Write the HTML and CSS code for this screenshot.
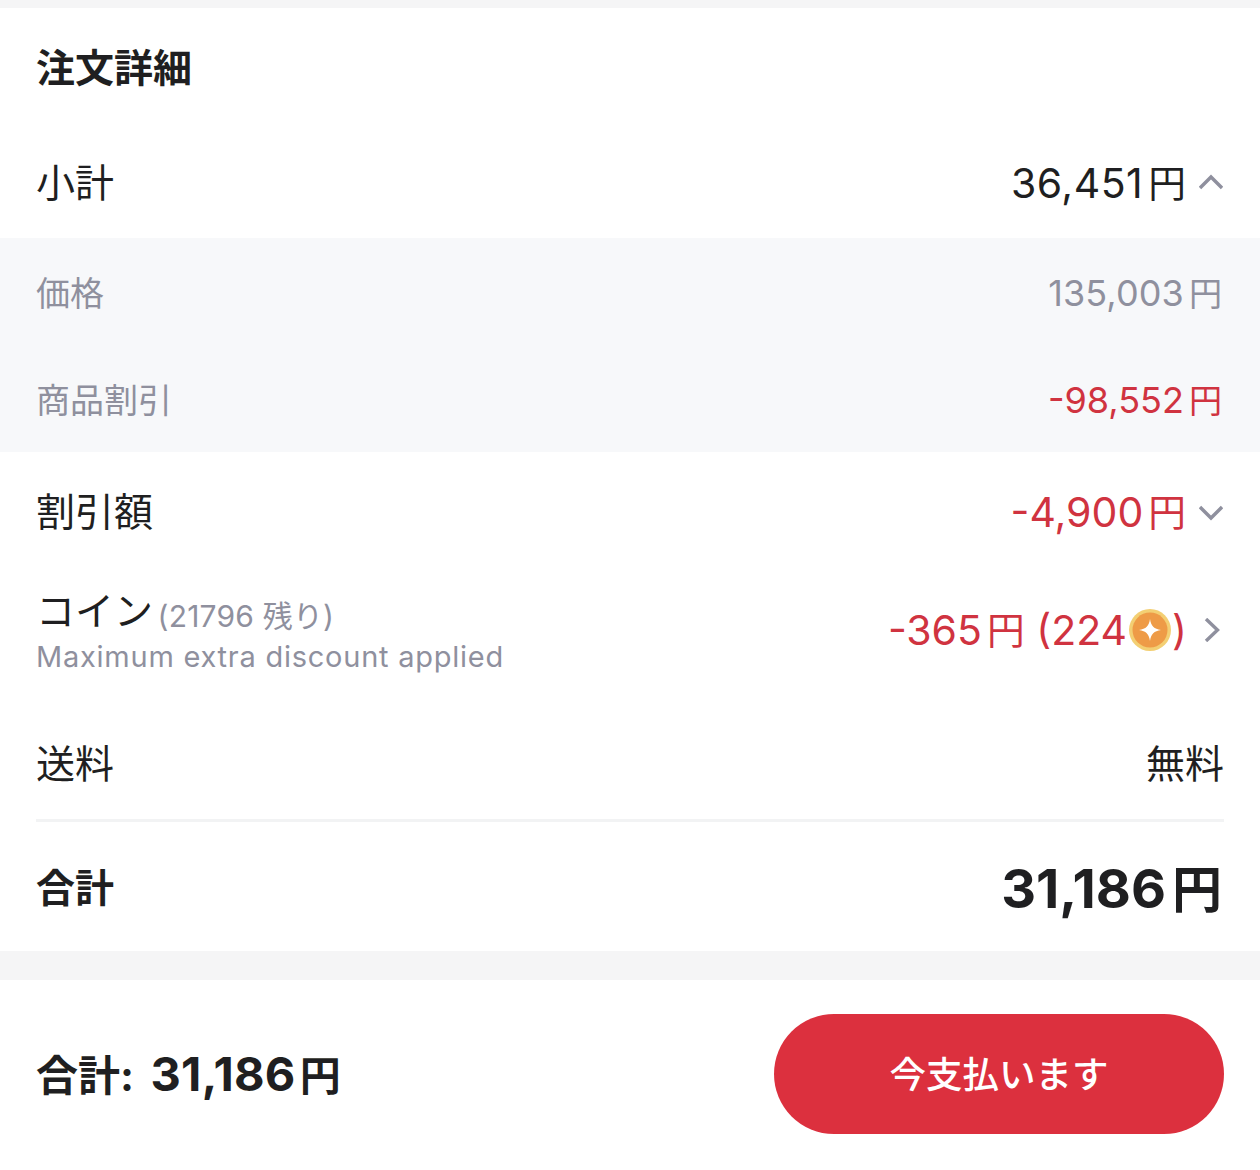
FILE: index.html
```
<!DOCTYPE html>
<html lang="ja">
<head>
<meta charset="utf-8">
<title>注文詳細</title>
<link rel="stylesheet" href="styles.css">
</head>
<body>
<main class="page">
  <section class="card">
    <h2 class="title">注文詳細</h2>
    <div class="row row-subtotal">
      <span class="label">小計</span>
      <span class="value">36,451<span class="yen">円</span><svg class="chev" viewBox="0 0 24 24"><path d="M1 17 L12 6 L23 17"/></svg></span>
    </div>
    <div class="details">
      <div class="detail"><span>価格</span><span class="detail-value">135,003<span class="yen">円</span></span></div>
      <div class="detail"><span>商品割引</span><span class="detail-value red">-98,552<span class="yen">円</span></span></div>
    </div>
    <div class="row row-discount">
      <span class="label">割引額</span>
      <span class="value red">-4,900<span class="yen">円</span><svg class="chev" viewBox="0 0 24 24"><path d="M1 7 L12 18 L23 7"/></svg></span>
    </div>
    <div class="row row-coin">
      <div class="coin-text">
        <div class="coin-line"><span class="label">コイン</span> <span class="coin-left">(21796 残り)</span></div>
        <div class="coin-note">Maximum extra discount applied</div>
      </div>
      <span class="value red">-365<span class="yen">円</span>&nbsp;(224<svg class="coin" viewBox="0 0 42 42"><circle cx="21" cy="21" r="21" fill="#f3cf73"/><circle cx="21" cy="21" r="17.5" fill="#ee9b47"/><path d="M21 10 C22 17 25 20 32 21 C25 22 22 25 21 32 C20 25 17 22 10 21 C17 20 20 17 21 10Z" fill="#fff"/></svg>)<svg class="chev chev-right" viewBox="0 0 24 24"><path d="M7 1 L18.5 12 L7 23"/></svg></span>
    </div>
    <div class="row row-shipping">
      <span class="label">送料</span>
      <span class="value ship">無料</span>
    </div>
    <div class="row row-total">
      <span class="label strong">合計</span>
      <span class="total-value">31,186<span class="yen">円</span></span>
    </div>
  </section>
  <footer class="bar">
    <span class="bar-total"><span class="bar-label">合計:</span> 31,186<span class="yen">円</span></span>
    <button class="pay"><span class="pay-text">今支払います</span></button>
  </footer>
</main>
</body>
</html>
```
FILE: styles.css
```
* { box-sizing: border-box; }
html, body { margin: 0; height: 100%; }
body {
  background: #f5f5f6;
  color: #1f1f21;
  font-family: Inter, "Noto Sans CJK JP", sans-serif;
}
.page { width: 1260px; height: 1170px; padding-top: 8px; display: flex; flex-direction: column; gap: 29px; }
.card { background: #fff; height: 943px; display: flex; flex-direction: column; }
.title { margin: 0; padding: 34px 36px 0; height: 120px; font-size: 39px; line-height: 52px; font-weight: 700; }
.row { display: flex; justify-content: space-between; align-items: center; padding: 0 36px; }
.row-subtotal { height: 110px; }
.row-discount { height: 120px; }
.row-coin { height: 116px; }
.row-shipping { height: 134px; padding-top: 18px; position: relative; }
.row-shipping::after { content: ""; position: absolute; left: 36px; right: 36px; bottom: 0; height: 3px; background: #f2f3f4; }
.row-total { height: 129px; padding-top: 6px; }
.label { font-size: 39px; line-height: 50px; }
.strong { font-weight: 700; margin-top: -4px; }
.value { display: inline-flex; align-items: center; font-size: 41px; line-height: 50px; white-space: nowrap; letter-spacing: 0.5px; }
.ship { font-size: 39px; letter-spacing: 0; }
.yen { margin-left: 5px; font-size: 0.92em; letter-spacing: 0; }
.red { color: #d03340; }
.value.red { letter-spacing: 0; }
.value.red .yen { margin-left: 5px; }
.chev { width: 24px; height: 24px; margin-left: 13px; margin-right: 1px; fill: none; stroke: #8f909e; stroke-width: 3.4; }
.chev-right { margin-left: 12px; margin-right: 1px; }
.coin { width: 42px; height: 42px; margin: 0 1px 0 2px; }
.details { background: #f7f8fa; height: 214px; padding: 0 38px 0 36px; display: flex; flex-direction: column; color: #8f909e; font-size: 34px; }
.detail { height: 107px; display: flex; justify-content: space-between; align-items: center; }
.detail-value { font-size: 36px; letter-spacing: 0.1px; }
.detail-value.red { color: #d03340; letter-spacing: 0; }
.coin-text { display: flex; flex-direction: column; padding-top: 2px; }
.coin-line { height: 48px; line-height: 48px; white-space: nowrap; }
.coin-left { font-size: 30px; color: #8f909e; letter-spacing: 0.2px; position: relative; top: 2px; }
.coin-note { font-size: 29px; line-height: 40px; letter-spacing: 0.75px; color: #8f909e; margin-top: 3px; }
.total-value { font-size: 54px; font-weight: 700; line-height: 60px; margin-right: 2px; }
.total-value .yen { margin-left: 6px; font-size: 50px; }
.bar { background: #fff; flex: 1; display: flex; justify-content: space-between; align-items: center; padding: 0 36px; }
.bar-total { font-size: 47px; font-weight: 700; line-height: 56px; letter-spacing: 0.3px; white-space: nowrap; }
.bar-label { font-size: 42px; margin-right: 5px; letter-spacing: 0; }
.bar-total .yen { font-size: 41px; margin-left: 4px; }
.pay { width: 450px; height: 120px; margin-bottom: 2px; padding: 0 0 4px; border: 0; border-radius: 60px; background: #dc303e; color: #fff; font: 500 36.5px Inter, "Noto Sans CJK JP", sans-serif; }
```
